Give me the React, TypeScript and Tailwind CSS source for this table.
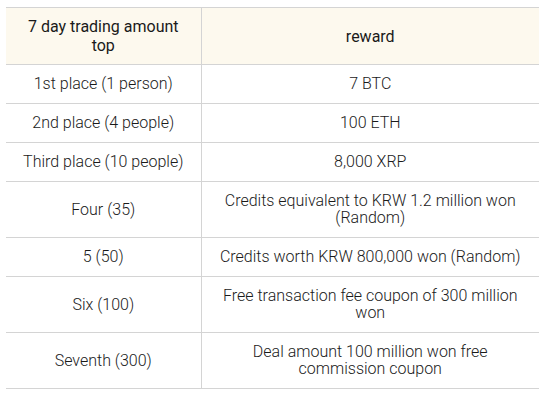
import React from "react";

const rows: [string, string][] = [
  ["1st place (1 person)", "7 BTC"],
  ["2nd place (4 people)", "100 ETH"],
  ["Third place (10 people)", "8,000 XRP"],
  ["Four (35)", "Credits equivalent to KRW 1.2 million won (Random)"],
  ["5 (50)", "Credits worth KRW 800,000 won (Random)"],
  ["Six (100)", "Free transaction fee coupon of 300 million won"],
  ["Seventh (300)", "Deal amount 100 million won free commission coupon"],
];

export default function App() {
  return (
    <div className="w-[549px] h-[400px] bg-white pt-[7px] pl-[6px]" style={{ fontFamily: "Roboto, 'Liberation Sans', sans-serif" }}>
      <table className="w-[533px] border-collapse text-[16px] text-[#1a1a1a] table-fixed">
        <colgroup>
          <col className="w-[195px]" />
          <col />
        </colgroup>
        <thead>
          <tr className="bg-[#fdf9ee]">
            <th className="border-y border-[#d4d4d4] border-r font-normal leading-[19px] text-center px-[18px] pt-[9px] pb-[9px]">
              7 day trading amount top
            </th>
            <th className="border-y border-[#d4d4d4] font-normal leading-[19px] text-center px-[12px] pt-[9px] pb-[9px]">
              reward
            </th>
          </tr>
        </thead>
        <tbody>
          {rows.map(([a, b]) => (
            <tr key={a}>
              <td className="border-b border-r border-[#d4d4d4] font-light leading-[17px] text-center px-[10px] pt-[10px] pb-[11px]">{a}</td>
              <td className="border-b border-[#d4d4d4] font-light leading-[17px] text-center px-[14px] pt-[10px] pb-[11px]">{b}</td>
            </tr>
          ))}
        </tbody>
      </table>
    </div>
  );
}
